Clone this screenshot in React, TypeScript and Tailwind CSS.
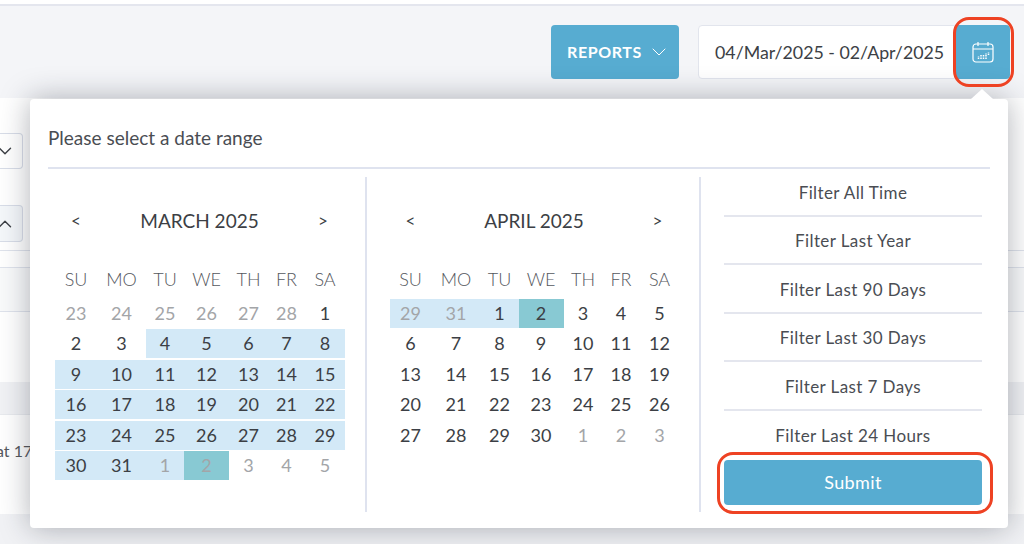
import React from "react";
import { ChevronDown, ChevronUp } from "lucide-react";

const colClasses = "grid grid-cols-[42px_49px_38px_45px_39px_37px_40px]";
const weekDays = ["SU", "MO", "TU", "WE", "TH", "FR", "SA"];

type Day = { d: number; muted?: boolean; range?: boolean; end?: boolean };

const m = (d: number, flags: Partial<Day> = {}): Day => ({ d, ...flags });

const march: Day[] = [
  ...[23, 24, 25, 26, 27, 28].map((d) => m(d, { muted: true })),
  m(1),
  m(2),
  m(3),
  ...[4, 5, 6, 7, 8].map((d) => m(d, { range: true })),
  ...Array.from({ length: 21 }, (_, i) => m(i + 9, { range: true })),
  m(30, { range: true }),
  m(31, { range: true }),
  m(1, { muted: true, range: true }),
  m(2, { muted: true, end: true }),
  m(3, { muted: true }),
  m(4, { muted: true }),
  m(5, { muted: true }),
];

const april: Day[] = [
  m(29, { muted: true, range: true }),
  m(31, { muted: true, range: true }),
  m(1, { range: true }),
  m(2, { end: true }),
  ...Array.from({ length: 27 }, (_, i) => m(i + 3)),
  m(30),
  m(1, { muted: true }),
  m(2, { muted: true }),
  m(3, { muted: true }),
];

const filters = [
  "Filter All Time",
  "Filter Last Year",
  "Filter Last 90 Days",
  "Filter Last 30 Days",
  "Filter Last 7 Days",
  "Filter Last 24 Hours",
];

const CalendarIcon = () => (
  <svg width="22" height="22" viewBox="0 0 22 22" fill="none" stroke="currentColor" strokeWidth="1.2">
    <rect x="1" y="3" width="20" height="18" rx="3" />
    <path d="M1 8h20M6 1v4M16 1v4" />
    <path
      d="M6.500 15.500v2.500M9 14v4M11.500 14v4M14 12.500v5.500M16.500 11.500v3"
      strokeWidth="1.500"
      strokeDasharray="1 0.500"
    />
  </svg>
);

const Calendar = ({ title, days }: { title: string; days: Day[] }) => (
  <div className="w-[290px]">
    <div className="flex items-center h-[26px] text-[#3c3f45]">
      <span className="w-[42px] text-center text-[17px]">&lt;</span>
      <span className="flex-1 text-center text-[19px] pl-[1px]">{title}</span>
      <span className="w-[44px] text-center text-[17px]">&gt;</span>
    </div>
    <div className={`${colClasses} mt-[33px] mb-[8px] font-light text-[18px] leading-[24px] text-[#55585e] text-center`}>
      {weekDays.map((w) => (
        <span key={w}>{w}</span>
      ))}
    </div>
    <div className={`${colClasses} gap-y-[1.4px] text-[18px] text-center`}>
      {days.map((day, i) => (
        <span
          key={i}
          className={`h-[29px] leading-[29px] ${day.muted ? "text-[#a3a5a8]" : "text-[#3c3f45]"} ${
            day.end ? "bg-[#88c9d3]" : day.range ? "bg-[#d3e9f7]" : ""
          }`}
        >
          {day.d}
        </span>
      ))}
    </div>
  </div>
);

export default function App() {
  return (
    <div className="relative h-[544px] w-[1024px] overflow-hidden bg-[#f1f2f5] font-['Lato','Open_Sans',sans-serif]">
      {/* Top strip */}
      <div className="h-[6px] bg-white border-b-2 border-[#e4e6ee]" />

      {/* Toolbar */}
      <div className="flex justify-end h-[92px] pt-[19px] pr-[14px] bg-[#f4f5f8]">
        <button className="flex items-center justify-start gap-[5px] w-[128px] h-[54px] pl-[16px] rounded bg-[#57acd1] text-white font-bold text-[16px] tracking-[0.6px]">
          REPORTS
          <ChevronDown className="w-[24px] h-[24px]" strokeWidth={1} />
        </button>
        <div className="flex items-center w-[257px] h-[54px] ml-[19px] pl-[16px] bg-white border border-[#e2e5ed] rounded-l text-[17.8px] text-[#3c3f45]">
          04/Mar/2025 - 02/Apr/2025
        </div>
        <button className="flex items-center justify-center w-[55px] h-[54px] rounded-r bg-[#57acd1] text-white">
          <CalendarIcon />
        </button>
      </div>

      {/* Page content behind the popover */}
      <div className="h-[284px] bg-white pt-[35px] text-[#3c3f45]">
        <div className="flex items-center justify-end w-[23px] h-[36px] pr-[6px] border border-l-0 border-[#d8dde8] rounded-r">
          <ChevronDown className="w-[22px] h-[22px] shrink-0" strokeWidth={1.5} />
        </div>
        <div className="flex items-center justify-end w-[23px] h-[37px] mt-[36px] pr-[6px] bg-[#f4f7fa] border border-l-0 border-[#d8dde8] rounded-r">
          <ChevronUp className="w-[22px] h-[22px] shrink-0" strokeWidth={1.5} />
        </div>
        <div className="h-[9px] border-b border-[#dfe3ec]" />
        <div className="h-[17px] border-b border-[#dfe3ec]" />
        <div className="h-[44px] bg-[#f9fafb] border-b border-[#dfe3ec]" />
      </div>
      <div className="h-[100px] mt-[32px] bg-white border-t border-[#e8eaee] pt-[24px] text-[16px] text-[#55585e] whitespace-nowrap overflow-hidden">
        <span className="block ml-[-4px]">at 17</span>
      </div>

      {/* Popover */}
      <div className="absolute left-[30px] top-[99px] w-[978px] h-[429px] bg-white rounded shadow-[0_0_30px_rgba(30,35,50,0.35)] pl-[18px] pr-[18px]">
        <div className="absolute right-[15px] top-[-10px] w-0 h-0 border-x-[11px] border-x-transparent border-b-[10px] border-b-white" />
        <div className="h-[70px] border-b-2 border-[#dfe3ef] pt-[26px] text-[19px] leading-[26px] text-[#4a4d53]">
          Please select a date range
        </div>
        <div className="flex h-[335px] mt-[8px]">
          <div className="w-[319px] pl-[7px] pt-[31px] border-r-2 border-[#dfe3ef]">
            <Calendar title="MARCH 2025" days={march} />
          </div>
          <div className="w-[334px] pl-[22.5px] pt-[31px] border-r-2 border-[#dfe3ef]">
            <Calendar title="APRIL 2025" days={april} />
          </div>
          <div className="w-[258px] ml-[23px] mt-[-9px]">
            {filters.map((f, i) => (
              <div
                key={f}
                className={`h-[48.600px] flex items-center justify-center text-[17px] tracking-[0.4px] text-[#4a4d53] ${
                  i < 5 ? "pt-[2px] border-b-2 border-[#e4e6ee]" : ""
                }`}
              >
                {f}
              </div>
            ))}
            <button className="block w-[258px] h-[45px] rounded bg-[#57acd1] text-white text-[18px] tracking-[0.4px]">
              Submit
            </button>
          </div>
        </div>
      </div>

      {/* Annotation rings */}
      <div className="absolute left-[953px] top-[17px] w-[61px] h-[70px] rounded-[16px] border-[3px] border-[#ee4223]" />
      <div className="absolute left-[717px] top-[452px] w-[276px] h-[62px] rounded-[16px] border-[3px] border-[#ee4223]" />
    </div>
  );
}
